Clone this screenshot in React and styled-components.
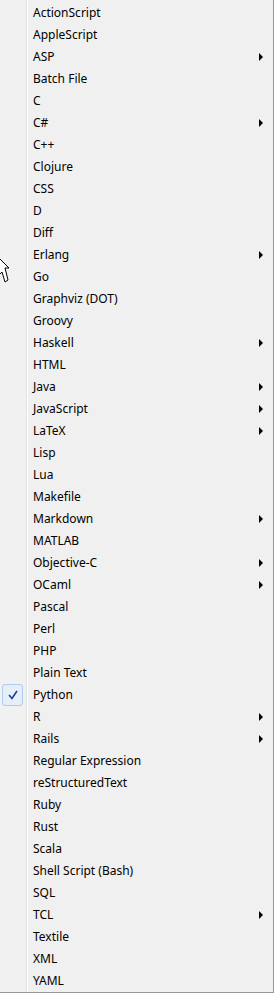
import React from 'react';
import styled, { createGlobalStyle } from 'styled-components';

const Global = createGlobalStyle`
body {
  margin: 0;
  background: #ffffff;
  font-family: "Segoe UI", "Noto Sans", sans-serif;
}`

const Menu = styled.div`
position: relative;
width: 274px;
box-sizing: border-box;
padding-top: 2px;
border-right: 1px solid #979797;
border-bottom: 1px solid #979797;
background: linear-gradient(to right, #f1f1f1 0 26px, #e2e3e3 26px 27px, #ffffff 27px 28px, #f0f0f0 28px);`

const Row = styled.div`
display: grid;
grid-template-columns: 33px 1fr 20px;
align-items: center;
height: 22px;
font-size: 12px;
color: #000;`

const Gutter = styled.div`
display: flex;
align-items: center;
height: 22px;`

const Check = styled.div`
display: flex;
align-items: center;
justify-content: center;
margin-left: 2px;
width: 21px;
height: 22px;
box-sizing: border-box;
border: 1px solid #aecbf0;
border-radius: 3px;
background: #e6eefb;`

const Label = styled.span`
white-space: nowrap;
line-height: 22px;`

const Arrow = styled.span`
width: 0;
height: 0;
border-left: 4px solid #000;
border-top: 4px solid transparent;
border-bottom: 4px solid transparent;
margin-left: 6px;`

const Cursor = styled.svg`
position: absolute;
left: -4px;
top: 255px;`

const items = [
  ['ActionScript'], ['AppleScript'], ['ASP', 1], ['Batch File'], ['C'], ['C#', 1],
  ['C++'], ['Clojure'], ['CSS'], ['D'], ['Diff'], ['Erlang', 1], ['Go'],
  ['Graphviz (DOT)'], ['Groovy'], ['Haskell', 1], ['HTML'], ['Java', 1],
  ['JavaScript', 1], ['LaTeX', 1], ['Lisp'], ['Lua'], ['Makefile'], ['Markdown', 1],
  ['MATLAB'], ['Objective-C', 1], ['OCaml', 1], ['Pascal'], ['Perl'], ['PHP'],
  ['Plain Text'], ['Python', 0, 1], ['R', 1], ['Rails', 1], ['Regular Expression'],
  ['reStructuredText'], ['Ruby'], ['Rust'], ['Scala'], ['Shell Script (Bash)'],
  ['SQL'], ['TCL', 1], ['Textile'], ['XML'], ['YAML'],
];

export default () => (
  <>
    <Global />
    <Menu>
      {items.map(([name, sub, checked]) => (
        <Row key={name}>
          <Gutter>
            {checked ? (
              <Check>
                <svg width="10" height="10" viewBox="0 0 10 10">
                  <path d="M1 5 L4 8.5 L9 1" fill="none" stroke="#1b3c97" strokeWidth="1.6" />
                </svg>
              </Check>
            ) : null}
          </Gutter>
          <Label>{name}</Label>
          {sub ? <Arrow /> : <span />}
        </Row>
      ))}
      <Cursor width="16" height="30" viewBox="0 0 16 30">
        <path d="M1 1 L13 13 L9 13 L12 25 L9 27 L6 17 L1 22 Z" fill="#fff" stroke="#000" strokeWidth="1" />
      </Cursor>
    </Menu>
  </>
)
